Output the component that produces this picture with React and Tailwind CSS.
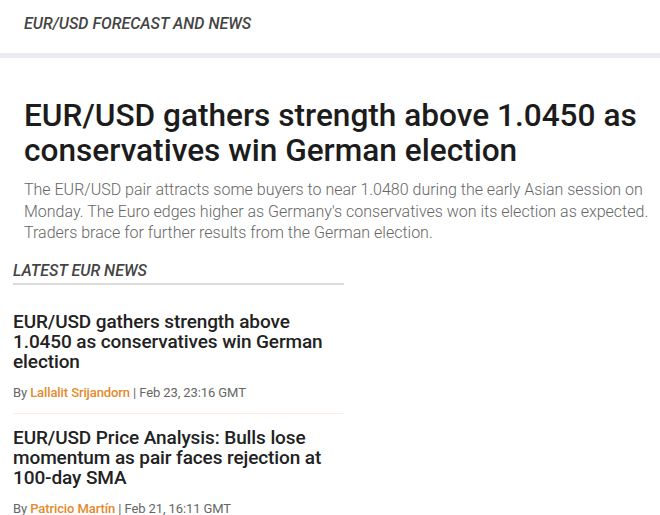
const articles = [
  {
    title: "EUR/USD gathers strength above 1.0450 as conservatives win German election",
    author: "Lallalit Srijandorn",
    date: "Feb 23, 23:16 GMT",
  },
  {
    title: "EUR/USD Price Analysis: Bulls lose momentum as pair faces rejection at 100-day SMA",
    author: "Patricio Martín",
    date: "Feb 21, 16:11 GMT",
  },
]

function NewsItem({ item, last }) {
  return (
    <div className={`pt-[14px] pb-[12px] ${last ? "" : "border-b border-[#fcefe2]"}`}>
      <h3 className="text-[19px] leading-[20px] font-medium text-[#222] tracking-[-0.1px]">{item.title}</h3>
      <div className="mt-[13px] text-[13px] leading-[16px] text-[#666] tracking-[-0.1px]">
        By <span className="text-[#e5892a] font-medium">{item.author}</span> | {item.date}
      </div>
    </div>
  )
}

export default function App() {
  return (
    <div className="w-[660px] h-[515px] overflow-hidden bg-white" style={{ fontFamily: "Roboto, 'Noto Sans', sans-serif" }}>
      <div className="h-[53px] pl-6 pt-[14px]">
        <h2 className="text-[16px] leading-[20px] italic font-medium text-[#444]">EUR/USD FORECAST AND NEWS</h2>
      </div>
      <div className="h-[5px] bg-[#ebebf0]"></div>

      <div className="pl-6 pr-2 pt-[40px]">
        <h1 className="text-[31.6px] leading-[35px] font-medium text-[#1c1c1c]">
          EUR/USD gathers strength above 1.0450 as conservatives win German election
        </h1>
        <p className="mt-[11px] text-[16px] leading-[21.5px] font-light text-[#666]">
          The EUR/USD pair attracts some buyers to near 1.0480 during the early Asian session on Monday. The Euro edges higher as Germany's conservatives won its election as expected. Traders brace for further results from the German election.
        </p>
      </div>

      <div className="pl-[13px] w-[344px] mt-[17px]">
        <div className="border-b-2 border-[#dcdcdc] pb-[2px]">
          <h2 className="text-[16px] leading-[20px] italic font-medium text-[#444]">LATEST EUR NEWS</h2>
        </div>
        <div className="pt-[13px]">
          {articles.map((a, i) => (
            <NewsItem key={i} item={a} last={i === articles.length - 1} />
          ))}
        </div>
      </div>
    </div>
  )
}
